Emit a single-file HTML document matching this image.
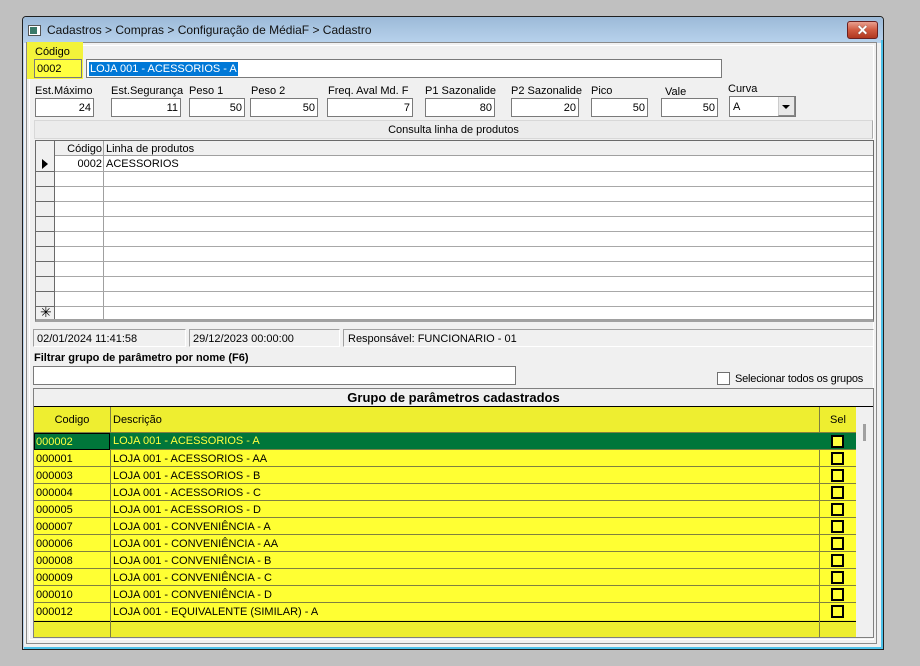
<!DOCTYPE html>
<html><head><meta charset="utf-8"><style>
*{margin:0;padding:0;box-sizing:border-box}
body{width:920px;height:666px;background:#c0c0c0;position:relative;overflow:hidden;font-family:"Liberation Sans",sans-serif;font-size:11px;color:#000}
.a{position:absolute}
.in{position:absolute;background:#fff;border:1px solid #7a7a7a;height:19px;line-height:19px;padding:0 2px;text-align:right}
.lb{position:absolute;font-size:11px}
.r{height:17px;background:#ffff33;border-bottom:1px solid #808040;position:relative}
.r span{position:absolute;line-height:18px}
.cb{top:2px;width:13px;height:13px;border:2px solid #000;left:797px}
</style></head><body>
<div class="a" style="left:22px;top:16px;width:862px;height:634px;background:#f0f0f0;border:1px solid #202020;border-radius:4px 4px 0 0"></div>
<div class="a" style="left:23px;top:17px;width:860px;height:26px;background:linear-gradient(#9cbad8,#b8d2ec);border-radius:3px 3px 0 0"></div>
<div class="a" style="left:881px;top:40px;width:2px;height:609px;background:#4cc0e8"></div>
<div class="a" style="left:23px;top:647px;width:860px;height:2px;background:#4cc0e8"></div>
<div class="a" style="left:23px;top:40px;width:1px;height:609px;background:#b8d2ec"></div>
<div class="a" style="left:28px;top:25px;width:13px;height:11px;background:#fff;border:1px solid #555"></div>
<div class="a" style="left:30px;top:27px;width:7px;height:7px;background:#3a7a6a"></div>
<div class="lb" style="left:47px;top:23px;font-size:12px;color:#111">Cadastros &gt; Compras &gt; Configuração de MédiaF &gt; Cadastro</div>
<div class="a" style="left:847px;top:21px;width:31px;height:18px;border:1px solid #6a2020;border-radius:3px;background:linear-gradient(#e8a090 0%,#d05a40 50%,#b03820 100%)"></div>
<div class="a" style="left:847px;top:20px;width:31px;height:18px;text-align:center;color:#fff;font-weight:bold;font-size:14px;line-height:20px;text-shadow:0 0 1px #444">✕</div>
<div class="a" style="left:26px;top:42px;width:851px;height:602px;border:1px solid #8a8a8a;background:#f0f0f0"></div>
<div class="a" style="left:29px;top:45px;width:845px;height:595px;border:1px solid #fff"></div>
<div class="a" style="left:27px;top:42px;width:56px;height:37px;background:#f3f33a"></div>
<div class="lb" style="left:35px;top:46px">Código</div>
<div class="in" style="left:34px;top:59px;width:48px;background:#ffff40;text-align:left">0002</div>
<div class="in" style="left:86px;top:59px;width:636px;text-align:left"><span style="background:#0078d7;color:#fff;padding:1px 1px">LOJA 001 - ACESSORIOS - A</span></div>
<div class="lb" style="left:35px;top:85px">Est.Máximo</div>
<div class="in" style="left:35px;top:98px;width:59px">24</div>
<div class="lb" style="left:111px;top:85px">Est.Segurança</div>
<div class="in" style="left:111px;top:98px;width:70px">11</div>
<div class="lb" style="left:189px;top:85px">Peso 1</div>
<div class="in" style="left:189px;top:98px;width:56px">50</div>
<div class="lb" style="left:251px;top:85px">Peso 2</div>
<div class="in" style="left:250px;top:98px;width:68px">50</div>
<div class="lb" style="left:328px;top:85px">Freq. Aval Md. F</div>
<div class="in" style="left:327px;top:98px;width:86px">7</div>
<div class="lb" style="left:425px;top:85px">P1 Sazonalide</div>
<div class="in" style="left:425px;top:98px;width:70px">80</div>
<div class="lb" style="left:511px;top:85px">P2 Sazonalide</div>
<div class="in" style="left:511px;top:98px;width:68px">20</div>
<div class="lb" style="left:591px;top:85px">Pico</div>
<div class="in" style="left:591px;top:98px;width:57px">50</div>
<div class="lb" style="left:665px;top:86px">Vale</div>
<div class="in" style="left:661px;top:98px;width:57px">50</div>
<div class="lb" style="left:728px;top:83px">Curva</div>
<div class="a" style="left:729px;top:96px;width:67px;height:21px;border:1px solid #7a7a7a;background:#fff;line-height:21px;padding-left:3px">A</div>
<div class="a" style="left:778px;top:97px;width:17px;height:19px;background:#e8e8e8;border-left:1px solid #ccc;border-right:1px solid #888;border-bottom:1px solid #888"></div>
<div class="a" style="left:782px;top:105px;width:0;height:0;border-left:4px solid transparent;border-right:4px solid transparent;border-top:4px solid #000"></div>
<div class="a" style="left:34px;top:120px;width:839px;height:19px;background:#ececec;border:1px solid #d8d8d8;border-right-color:#aaa;text-align:center;line-height:19px">Consulta linha de produtos</div>
<div class="a" style="left:35px;top:140px;width:839px;height:182px;background:#fff;border:1px solid #6a6a6a;border-bottom:3px solid #a0a0a0;overflow:hidden">
 <div class="a" style="left:0;top:0;width:839px;height:15px;background:#f0f0f0;border-bottom:1px solid #a0a0a0"></div>
 <div class="a" style="left:0;top:0;width:19px;height:180px;background:#f0f0f0;border-right:1px solid #6a6a6a"></div>
 <div class="a" style="left:67px;top:0;width:1px;height:180px;background:#a0a0a0"></div>
 <div class="a" style="left:20px;top:0;width:46px;text-align:right;line-height:16px">Código</div>
 <div class="a" style="left:70px;top:0;line-height:16px">Linha de produtos</div>
 <div class="a" style="left:33px;top:15px;width:33px;text-align:right;line-height:16px">0002</div>
 <div class="a" style="left:70px;top:15px;line-height:16px">ACESSORIOS</div>
 <div class="a" style="left:6px;top:18px;width:0;height:0;border-top:5px solid transparent;border-bottom:5px solid transparent;border-left:6px solid #000"></div>
 <div class="a" style="left:4px;top:163px;font-size:14px;line-height:16px">✳</div>
 <div class="a" style="left:0;top:30px;width:839px;height:150px;background:repeating-linear-gradient(to bottom,#a8a8a8 0,#a8a8a8 1px,transparent 1px,transparent 15px)"></div>
 <div class="a" style="left:0;top:30px;width:19px;height:150px;background:repeating-linear-gradient(to bottom,#6a6a6a 0,#6a6a6a 1px,transparent 1px,transparent 15px)"></div>
</div>
<div class="a" style="left:33px;top:329px;width:153px;height:18px;border:1px solid #a0a0a0;border-right-color:#fff;border-bottom-color:#fff;line-height:18px;padding-left:3px">02/01/2024 11:41:58</div>
<div class="a" style="left:189px;top:329px;width:151px;height:18px;border:1px solid #a0a0a0;border-right-color:#fff;border-bottom-color:#fff;line-height:18px;padding-left:3px">29/12/2023 00:00:00</div>
<div class="a" style="left:343px;top:329px;width:531px;height:18px;border:1px solid #a0a0a0;border-right-color:#fff;border-bottom-color:#fff;line-height:18px;padding-left:4px">Responsável: FUNCIONARIO - 01</div>
<div class="lb" style="left:34px;top:352px;font-weight:bold">Filtrar grupo de parâmetro por nome (F6)</div>
<div class="a" style="left:33px;top:366px;width:483px;height:19px;background:#fff;border:1px solid #7a7a7a"></div>
<div class="a" style="left:717px;top:372px;width:13px;height:13px;background:#fff;border:1px solid #707070"></div>
<div class="lb" style="left:735px;top:373px;letter-spacing:-0.2px">Selecionar todos os grupos</div>
<div class="a" style="left:33px;top:388px;width:841px;height:250px;border:1px solid #808080;background:#f0f0f0"></div>
<div class="a" style="left:34px;top:389px;width:839px;text-align:center;font-weight:bold;font-size:13px;line-height:17px">Grupo de parâmetros cadastrados</div>
<div class="a" style="left:34px;top:406px;width:839px;height:1px;background:#000"></div>
<div class="a" style="left:34px;top:407px;width:822px;height:230px;background:#eeee30"></div>
<div class="a" style="left:34px;top:407px;width:822px;height:26px;border-bottom:1px solid #808040"></div>
<div class="a" style="left:34px;top:407px;width:76px;text-align:center;line-height:27px">Codigo</div>
<div class="a" style="left:113px;top:407px;line-height:27px">Descrição</div>
<div class="a" style="left:820px;top:407px;width:36px;text-align:center;line-height:27px">Sel</div>
<div class="a" style="left:34px;top:621px;width:822px;height:1px;background:#000"></div>
<div class="a" style="left:110px;top:407px;width:1px;height:230px;background:#808040"></div>
<div class="a" style="left:819px;top:407px;width:1px;height:230px;background:#808040"></div>
<div class="a" style="left:863px;top:424px;width:3px;height:17px;background:#a0a0a0"></div>
<div class="a" style="left:34px;top:433px;width:822px">
<div style="position:relative;height:17px;background:#00763a;color:#ffff40;border-bottom:1px solid #808040"><span class="a" style="left:0;top:0;width:76px;height:17px;border:1px solid #000;padding-left:1px;line-height:17px">000002</span><span class="a" style="left:79px;line-height:16px">LOJA 001 - ACESSORIOS - A</span><span class="a cb" style="background:#ffff40"></span></div>
</div>
<div class="a" style="left:34px;top:450px;width:822px">
<div class="r"><span style="left:2px">000001</span><span style="left:79px">LOJA 001 - ACESSORIOS - AA</span><span class="cb"></span></div>
<div class="r"><span style="left:2px">000003</span><span style="left:79px">LOJA 001 - ACESSORIOS - B</span><span class="cb"></span></div>
<div class="r"><span style="left:2px">000004</span><span style="left:79px">LOJA 001 - ACESSORIOS - C</span><span class="cb"></span></div>
<div class="r"><span style="left:2px">000005</span><span style="left:79px">LOJA 001 - ACESSORIOS - D</span><span class="cb"></span></div>
<div class="r"><span style="left:2px">000007</span><span style="left:79px">LOJA 001 - CONVENIÊNCIA - A</span><span class="cb"></span></div>
<div class="r"><span style="left:2px">000006</span><span style="left:79px">LOJA 001 - CONVENIÊNCIA - AA</span><span class="cb"></span></div>
<div class="r"><span style="left:2px">000008</span><span style="left:79px">LOJA 001 - CONVENIÊNCIA - B</span><span class="cb"></span></div>
<div class="r"><span style="left:2px">000009</span><span style="left:79px">LOJA 001 - CONVENIÊNCIA - C</span><span class="cb"></span></div>
<div class="r"><span style="left:2px">000010</span><span style="left:79px">LOJA 001 - CONVENIÊNCIA - D</span><span class="cb"></span></div>
<div class="r" style="border-bottom:none"><span style="left:2px">000012</span><span style="left:79px">LOJA 001 - EQUIVALENTE (SIMILAR) - A</span><span class="cb"></span></div>
</div>
<div class="a" style="left:110px;top:450px;width:1px;height:171px;background:#808040"></div>
<div class="a" style="left:819px;top:450px;width:1px;height:171px;background:#808040"></div>
</body></html>
